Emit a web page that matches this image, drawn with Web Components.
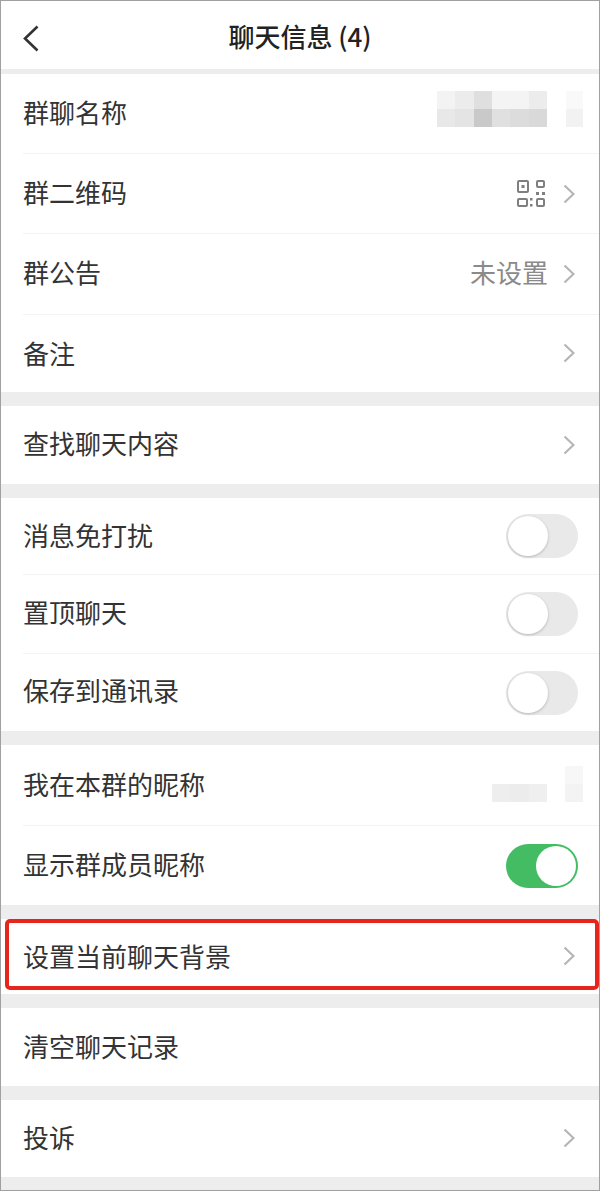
<!DOCTYPE html>
<html lang="zh">
<head>
<meta charset="utf-8">
<title>聊天信息</title>
<style>
  html, body { margin: 0; padding: 0; background: #ededed; }
  body { font-family: "Noto Sans CJK SC", "Noto Sans", sans-serif; }
</style>
</head>
<body>
<wx-page>
  <wx-header>聊天信息 (4)</wx-header>

  <wx-group style="margin-top:5px">
    <wx-row label="群聊名称" height="80" style="--lift:5px">
      <wx-mosaic style="margin:-10px -8px 0 0" cols="6" size="18.33" gap="19" colors="f3f3f3 ececec dfdfdf f4f4f4 f4f4f4 ececec e8e8e8 e4e4e4 c9c9c9 e0e0e0 dcdcdc d9d9d9" tail="f9f9f9 f2f2f2" tail-width="17"></wx-mosaic>
    </wx-row>
    <wx-row label="群二维码" height="80" arrow style="--lift:5px"><wx-qr></wx-qr></wx-row>
    <wx-row label="群公告" height="81" arrow style="--lift:5px"><span class="value">未设置</span></wx-row>
    <wx-row label="备注" height="77" arrow last style="--lift:1px"></wx-row>
  </wx-group>

  <wx-group>
    <wx-row label="查找聊天内容" height="78" arrow last style="--lift:5px"></wx-row>
  </wx-group>

  <wx-group>
    <wx-row label="消息免打扰" height="77"><wx-switch></wx-switch></wx-row>
    <wx-row label="置顶聊天" height="79" style="--lift:5px"><wx-switch></wx-switch></wx-row>
    <wx-row label="保存到通讯录" height="77" last style="--lift:5px"><wx-switch style="margin-top:2px"></wx-switch></wx-row>
  </wx-group>

  <wx-group>
    <wx-row label="我在本群的昵称" height="81">
      <wx-mosaic style="margin:-2px -8px 0 0" cols="3" size="18.33" gap="18" colors="ffffff ffffff ffffff eeeeee ececec efefef" tail="f7f7f7 f3f3f3" tail-width="18"></wx-mosaic>
    </wx-row>
    <wx-row label="显示群成员昵称" height="79" last><wx-switch on style="margin-top:2px"></wx-switch></wx-row>
  </wx-group>

  <wx-group>
    <wx-row label="设置当前聊天背景" height="75" arrow last marked style="--lift:1px"></wx-row>
  </wx-group>

  <wx-group>
    <wx-row label="清空聊天记录" height="78" last></wx-row>
  </wx-group>

  <wx-group>
    <wx-row label="投诉" height="77" arrow last></wx-row>
  </wx-group>
</wx-page>

<script>
class WxPage extends HTMLElement {
  constructor() {
    super();
    this.attachShadow({ mode: "open" });
    this.shadowRoot.innerHTML = `
    <style>
      :host {
        display: flex;
        flex-direction: column;
        box-sizing: border-box;
        width: 600px;
        height: 1191px;
        overflow: hidden;
        background: #ededed;
        color: #333;
        border: 1px solid #a0a0a0;
      }
    </style>
    <slot></slot>`;
  }
}

class WxHeader extends HTMLElement {
  constructor() {
    super();
    this.attachShadow({ mode: "open" });
    this.shadowRoot.innerHTML = `
    <style>
      :host {
        display: flex;
        align-items: center;
        justify-content: center;
        position: relative;
        flex: none;
        box-sizing: border-box;
        height: 68px;
        padding-top: 1px;
        background: #fff;
        font-size: 26px;
        font-weight: 500;
        color: #222;
      }
      svg { position: absolute; left: 21px; top: 23px; }
    </style>
    <svg width="18" height="30" viewBox="0 0 18 30" fill="none" stroke="#333" stroke-width="2.6">
      <path d="M15.5 2.5 3 14.5 15.5 26.5"/>
    </svg>
    <slot></slot>`;
  }
}

class WxGroup extends HTMLElement {
  constructor() {
    super();
    this.attachShadow({ mode: "open" });
    this.shadowRoot.innerHTML = `
    <style>
      :host {
        display: block;
        flex: none;
        background: #fff;
        margin-top: 14px;
      }
    </style>
    <slot></slot>`;
  }
}

class WxRow extends HTMLElement {
  constructor() {
    super();
    this.attachShadow({ mode: "open" });
  }

  connectedCallback() {
    const arrow = this.hasAttribute("arrow");
    const marked = this.hasAttribute("marked");
    this.shadowRoot.innerHTML = `
    <style>
      :host {
        display: block;
        position: relative;
        box-sizing: border-box;
        height: ${this.getAttribute("height")}px;
        padding-left: 22px;
      }
      .line {
        display: flex;
        align-items: center;
        box-sizing: border-box;
        height: 100%;
        padding-right: 24px;
        border-bottom: 1px solid ${this.hasAttribute("last") ? "transparent" : "#f3f3f3"};
        font-size: 26px;
        color: #333;
      }
      .label { flex: 1; padding-bottom: var(--lift, 3px); }
      .end {
        display: flex;
        align-items: center;
        font-size: 26px;
        color: #8a8a8a;
      }
      ::slotted(.value) { padding-bottom: var(--lift, 3px); }
      ::slotted(wx-switch) { margin-right: -3px; }
      .chev { margin-left: 15px; flex: none; }
      .mark {
        position: absolute;
        left: 4px;
        right: 0;
        top: 0;
        bottom: 4px;
        border: 4px solid #e6261c;
        border-radius: 5px;
      }
    </style>
    <div class="line">
      <span class="label">${this.getAttribute("label")}</span>
      <span class="end"><slot></slot>${arrow ? `
        <svg class="chev" width="12" height="20" viewBox="0 0 12 20" fill="none" stroke="#b5b5b5" stroke-width="2.2">
          <path d="M1.5 1.5 10.5 10 1.5 18.5"/>
        </svg>` : ""}</span>
    </div>
    ${marked ? `<div class="mark"></div>` : ""}`;
  }
}

class WxSwitch extends HTMLElement {
  constructor() {
    super();
    this.attachShadow({ mode: "open" });
  }

  connectedCallback() {
    const on = this.hasAttribute("on");
    this.shadowRoot.innerHTML = `
    <style>
      :host {
        display: flex;
        justify-content: ${on ? "flex-end" : "flex-start"};
        box-sizing: border-box;
        width: 72px;
        height: 44px;
        padding: 2px;
        border-radius: 22px;
        background: ${on ? "#43bc63" : "#e9e9e9"};
      }
      .knob {
        width: 40px;
        height: 40px;
        border-radius: 50%;
        background: #fff;
        box-shadow: ${on ? "none" : "0 1px 3px rgba(0,0,0,.22)"};
      }
    </style>
    <div class="knob"></div>`;
  }
}

class WxQr extends HTMLElement {
  constructor() {
    super();
    this.attachShadow({ mode: "open" });
    this.shadowRoot.innerHTML = `
    <style>
      :host { display: block; width: 30px; height: 30px; margin-right: 2px; }
      svg { display: block; }
    </style>
    <svg width="30" height="30" viewBox="0 0 30 30" fill="none" stroke="#7f7f7f" stroke-width="2">
      <rect x="2" y="2" width="10" height="11" rx="1"/>
      <rect x="21" y="2" width="7" height="6" rx="1"/>
      <rect x="2" y="20" width="9" height="7" rx="1"/>
      <rect x="21" y="20" width="7" height="7" rx="1"/>
      <g fill="#7f7f7f" stroke="none">
        <rect x="5.5" y="6" width="3" height="3"/>
        <rect x="20" y="13" width="3" height="3"/>
        <rect x="26" y="13" width="3" height="3"/>
        <rect x="14" y="19" width="2.5" height="2.5"/>
        <rect x="14" y="25" width="2.5" height="2.5"/>
      </g>
    </svg>`;
  }
}

// blurred-out names: a grid of flat grey squares plus one narrow tail block
class WxMosaic extends HTMLElement {
  constructor() {
    super();
    this.attachShadow({ mode: "open" });
  }

  connectedCallback() {
    const colors = this.getAttribute("colors").split(" ");
    const tail = this.getAttribute("tail").split(" ");
    const cell = (c) => `<i style="background:#${c}"></i>`;
    this.shadowRoot.innerHTML = `
    <style>
      :host { display: flex; gap: ${this.getAttribute("gap")}px; filter: blur(.5px); }
      .cells {
        display: grid;
        grid-template-columns: repeat(${this.getAttribute("cols")}, ${this.getAttribute("size")}px);
        grid-auto-rows: 18px;
      }
      .tail { display: grid; grid-template-columns: ${this.getAttribute("tail-width")}px; grid-auto-rows: 18px; }
    </style>
    <div class="cells">${colors.map(cell).join("")}</div>
    <div class="tail">${tail.map(cell).join("")}</div>`;
  }
}

customElements.define("wx-page", WxPage);
customElements.define("wx-header", WxHeader);
customElements.define("wx-group", WxGroup);
customElements.define("wx-row", WxRow);
customElements.define("wx-switch", WxSwitch);
customElements.define("wx-qr", WxQr);
customElements.define("wx-mosaic", WxMosaic);
</script>
</body>
</html>
